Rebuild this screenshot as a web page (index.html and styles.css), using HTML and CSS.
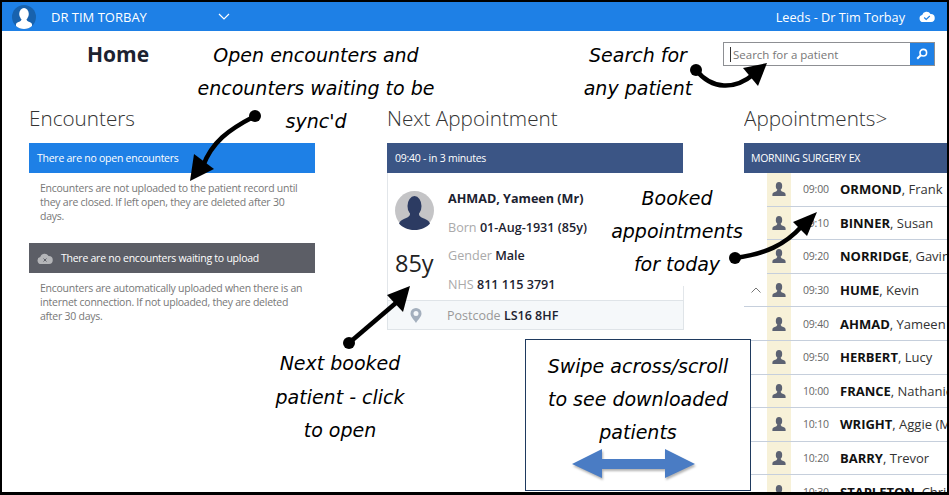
FILE: index.html
```html
<!DOCTYPE html>
<html lang="en">
<head>
    <meta charset="UTF-8">
    <title>Home</title>
    <link rel="stylesheet" href="styles.css">
</head>
<body>
<svg class="defs" width="0" height="0">
    <symbol id="person" viewBox="0 0 14 14">
        <ellipse cx="7" cy="4" rx="3.2" ry="4"/>
        <path d="M5.2 7.2c.2 1.4-.6 2-2 2.6C1.6 10.500.4 11 .4 12.400V14h13.200v-1.600c0-1.400-1.200-1.900-2.800-2.600-1.400-.6-2.200-1.200-2-2.600z"/>
    </symbol>
</svg>
<div class="frame">
    <header class="topbar">
        <svg class="user-icon" viewBox="0 0 24 24">
            <circle cx="12" cy="12" r="12" fill="#1862ae"/>
            <ellipse cx="12" cy="9" rx="4.800" ry="6" fill="#fff"/>
            <path d="M9.500 13.500c.2 2-1 2.800-3 3.500-1.500.6-2.500 1.200-2.500 2.500V21c2 2 5 3 8 3s6-1 8-3v-1.500c0-1.300-1-1.900-2.500-2.500-2-.7-3.200-1.500-3-3.500z" fill="#fff"/>
        </svg>
        <span class="user-name">DR TIM TORBAY</span>
        <svg class="chevron" viewBox="0 0 12 7"><path d="M1 1l5 5 5-5" fill="none" stroke="#fff" stroke-width="1.200"/></svg>
        <span class="site-name">Leeds - Dr Tim Torbay</span>
        <svg class="cloud-icon" viewBox="0 0 16 11">
            <path d="M4 11a3.500 3.500 0 0 1-.8-6.900A4.500 4.500 0 0 1 11.500 3a4 4 0 0 1 .5 8z" fill="#fff"/>
            <path d="M5.200 6.500l2 2 3.600-3.500" fill="none" stroke="#1e80e6" stroke-width="1.200"/>
        </svg>
    </header>

    <div class="title-row">
        <h1 class="page-title">Home</h1>
        <div class="search">
            <div class="search-input"><span class="caret"></span>Search for a patient</div>
            <div class="search-btn">
                <svg viewBox="0 0 12 12" width="12" height="12"><circle cx="7.300" cy="4.700" r="3.300" fill="none" stroke="#fff" stroke-width="1.600"/><path d="M4.800 7.200L1.200 10.800" stroke="#fff" stroke-width="2"/></svg>
            </div>
        </div>
    </div>

    <main class="columns">
        <section>
            <h2 class="col-title">Encounters</h2>
            <div class="banner banner-blue">There are no open encounters</div>
            <p class="note">Encounters are not uploaded to the patient record until they are closed. If left open, they are deleted after 30 days.</p>
            <div class="banner banner-grey">
                <svg class="upload-icon" viewBox="0 0 16 11">
                    <path d="M4 11a3.500 3.500 0 0 1-.8-6.900A4.500 4.500 0 0 1 11.500 3a4 4 0 0 1 .5 8z" fill="#b4b5b8"/>
                    <path d="M6.500 5.500l3 3m0-3l-3 3" stroke="#5c5e66" stroke-width="1"/>
                </svg>
                There are no encounters waiting to upload
            </div>
            <p class="note">Encounters are automatically uploaded when there is an internet connection. If not uploaded, they are deleted after 30 days.</p>
        </section>

        <section>
            <h2 class="col-title">Next Appointment</h2>
            <div class="banner banner-navy">09:40 - in 3 minutes</div>
            <div class="patient-card">
                <div class="patient-side">
                    <svg class="patient-photo" viewBox="0 0 39 39">
                        <circle cx="19.500" cy="19.500" r="19.500" fill="#c4c4c6"/>
                        <ellipse cx="19.500" cy="15" rx="7" ry="10" fill="#2c3b62"/>
                        <path d="M15 22c.3 3-1.500 4-5 5.500-3 1.200-5 2.500-6 5 3.500 4 9 6.500 15.500 6.500S31.500 36.500 35 32.500c-1-2.500-3-3.800-6-5-3.500-1.500-5.300-2.500-5-5.500z" fill="#2c3b62"/>
                    </svg>
                    <div class="patient-age">85y</div>
                </div>
                <div class="patient-info">
                    <div class="patient-line patient-name"><b>AHMAD, Yameen (Mr)</b></div>
                    <div class="patient-line"><span>Born</span> <b>01-Aug-1931 (85y)</b></div>
                    <div class="patient-line"><span>Gender</span> <b>Male</b></div>
                    <div class="patient-line"><span>NHS</span> <b>811 115 3791</b></div>
                </div>
            </div>
            <div class="postcode">
                <svg class="pin" viewBox="0 0 12 15">
                    <path fill-rule="evenodd" d="M6 0a5.500 5.500 0 0 1 5.500 5.500C11.500 9 8 11.500 6 15 4 11.500.5 9 .5 5.500A5.500 5.500 0 0 1 6 0zm0 3a2.500 2.500 0 1 0 0 5 2.500 2.500 0 0 0 0-5z" fill="#a3afbd"/>
                </svg>
                <span class="label">Postcode</span>&nbsp;<b>LS16 8HF</b>
            </div>
        </section>

        <section class="appts">
            <h2 class="col-title">Appointments&gt;</h2>
            <div class="banner banner-navy banner-session">MORNING SURGERY EX</div>
            <ul class="appt-list">
                <li class="appt"><i class="appt-flag"></i><span class="appt-icon"><svg><use href="#person"/></svg></span><span class="appt-time">09:00</span><span class="appt-name"><b>ORMOND</b>, Frank</span></li>
                <li class="appt"><i class="appt-flag"></i><span class="appt-icon"><svg><use href="#person"/></svg></span><span class="appt-time">09:10</span><span class="appt-name"><b>BINNER</b>, Susan</span></li>
                <li class="appt"><i class="appt-flag"></i><span class="appt-icon"><svg><use href="#person"/></svg></span><span class="appt-time">09:20</span><span class="appt-name"><b>NORRIDGE</b>, Gavin</span></li>
                <li class="appt"><i class="appt-flag"><svg viewBox="0 0 10 6"><path d="M.5 5.500L5 1l4.500 4.500" fill="none" stroke="#777" stroke-width="1"/></svg></i><span class="appt-icon"><svg><use href="#person"/></svg></span><span class="appt-time">09:30</span><span class="appt-name"><b>HUME</b>, Kevin</span></li>
                <li class="appt"><i class="appt-flag"></i><span class="appt-icon"><svg><use href="#person"/></svg></span><span class="appt-time">09:40</span><span class="appt-name"><b>AHMAD</b>, Yameen</span></li>
                <li class="appt"><i class="appt-flag"></i><span class="appt-icon"><svg><use href="#person"/></svg></span><span class="appt-time">09:50</span><span class="appt-name"><b>HERBERT</b>, Lucy</span></li>
                <li class="appt"><i class="appt-flag"></i><span class="appt-icon"><svg><use href="#person"/></svg></span><span class="appt-time">10:00</span><span class="appt-name"><b>FRANCE</b>, Nathaniel</span></li>
                <li class="appt"><i class="appt-flag"></i><span class="appt-icon"><svg><use href="#person"/></svg></span><span class="appt-time">10:10</span><span class="appt-name"><b>WRIGHT</b>, Aggie (Mrs)</span></li>
                <li class="appt"><i class="appt-flag"></i><span class="appt-icon"><svg><use href="#person"/></svg></span><span class="appt-time">10:20</span><span class="appt-name"><b>BARRY</b>, Trevor</span></li>
                <li class="appt"><i class="appt-flag"></i><span class="appt-icon"><svg><use href="#person"/></svg></span><span class="appt-time">10:30</span><span class="appt-name"><b>STAPLETON</b>, Chris</span></li>
            </ul>
        </section>
    </main>

    <!-- callouts drawn on top of the screen -->
    <div class="callout callout-open">Open encounters and<br>encounters waiting to be<br>sync'd</div>
    <div class="callout callout-search">Search for<br>any patient</div>
    <div class="callout callout-booked">Booked<br>appointments<br>for today</div>
    <div class="callout callout-next">Next booked<br>patient - click<br>to open</div>
    <div class="callout callout-swipe">Swipe across/scroll<br>to see downloaded<br>patients</div>

    <svg class="arrows" viewBox="0 0 949 495" width="949" height="495">
        <g fill="#000">
            <circle cx="255" cy="116" r="6"/>
            <path d="M255 116C228 130 212 142 203 166" fill="none" stroke="#000" stroke-width="4.500"/>
            <path d="M190 181l4-27 20 15z"/>
            <circle cx="696" cy="70" r="6"/>
            <path d="M696 70C712 90 735 90 754 74" fill="none" stroke="#000" stroke-width="4.500"/>
            <path d="M767 63l-24 5 15 18z"/>
            <circle cx="735" cy="258" r="6"/>
            <path d="M735 258C765 254 785 245 802 226" fill="none" stroke="#000" stroke-width="4.500"/>
            <path d="M817 212l-24 10 14 14z"/>
            <circle cx="349" cy="343" r="6"/>
            <path d="M349 343L397 302" fill="none" stroke="#000" stroke-width="4.500"/>
            <path d="M410 286l-23 9 16 17z"/>
        </g>
        <path class="swipe-arrow" d="M572 464l30-15v10h63v-10l30 15-30 14v-9h-63v9z"/>
    </svg>
</div>
</body>
</html>
```

FILE: styles.css
```css
* {
    box-sizing: border-box;
}
body {
    margin: 0;
    font-family: 'Open Sans', 'Noto Sans', sans-serif;
    background: #fff;
    color: #111;
}
.defs {
    position: absolute;
}
.frame {
    position: relative;
    width: 949px;
    height: 495px;
    border: 2px solid #000;
    border-bottom-width: 3px;
    overflow: hidden;
    background: #fff;
}
.topbar {
    display: flex;
    align-items: center;
    height: 29px;
    padding: 0 12px 0 10px;
    background: #1e80e6;
    color: #fff;
    font-size: 13px;
}
.user-icon {
    width: 24px;
    height: 24px;
}
.user-name {
    margin-left: 15px;
}
.chevron {
    width: 12px;
    height: 7px;
    margin-left: 71px;
}
.site-name {
    margin-left: auto;
    font-size: 12.700px;
}
.cloud-icon {
    width: 16px;
    height: 11px;
    margin-left: 14px;
}
.title-row {
    display: flex;
    justify-content: space-between;
    align-items: flex-start;
    height: 72px;
    padding: 11px 0 0 85px;
    margin-right: 12px;
}
.page-title {
    margin: 0;
    font-size: 21px;
    line-height: 24px;
    font-weight: 700;
    color: #1c2230;
}
.search {
    display: flex;
    width: 212px;
    height: 24px;
    border: 1px solid #8d8f93;
}
.search-input {
    display: flex;
    align-items: center;
    flex: 1;
    padding-left: 6px;
    font-size: 11.500px;
    color: #777;
}
.caret {
    width: 1px;
    height: 15px;
    margin-right: 2px;
    background: #333;
}
.search-btn {
    display: flex;
    align-items: center;
    justify-content: center;
    width: 24px;
    background: #1e80e6;
}
.columns {
    display: grid;
    grid-template-columns: 358px 357px 1fr;
    padding-left: 27px;
}
.col-title {
    margin: 0 0 10px;
    font-size: 20.700px;
    line-height: 30px;
    font-weight: 300;
    color: #333;
}
.banner {
    display: flex;
    align-items: center;
    height: 30px;
    padding-left: 8px;
    font-size: 10.500px;
    letter-spacing: -0.25px;
    color: #fff;
}
.banner-blue {
    width: 286px;
    margin-top: 1px;
    background: #1e80e6;
}
.banner-grey {
    width: 286px;
    background: #5c5e66;
}
.banner-navy {
    width: 296px;
    background: #3b5585;
}
.banner-session {
    width: auto;
    padding-left: 7px;
}
.upload-icon {
    width: 16px;
    height: 11px;
    margin-right: 8px;
}
.note {
    width: 267px;
    margin: 8px 0 20px 11px;
    font-size: 10.500px;
    letter-spacing: -0.25px;
    line-height: 14px;
    color: #777;
}
.patient-card {
    display: flex;
    width: 297px;
    height: 127px;
    padding: 18px 0 0 7px;
    border-left: 1px solid #e2e6ea;
    border-right: 1px solid #e2e6ea;
}
.patient-side {
    flex: none;
    width: 53px;
}
.patient-photo {
    display: block;
    width: 39px;
    height: 39px;
}
.patient-age {
    margin-top: 18px;
    font-size: 23.500px;
    line-height: 30px;
    color: #222;
}
.patient-info {
    font-size: 12.600px;
}
.patient-line {
    height: 28.500px;
    line-height: 16px;
    color: #aaa;
}
.patient-line b {
    color: #1c2230;
    font-weight: 600;
}
.patient-line.patient-name b {
    font-weight: 700;
}
.postcode {
    display: flex;
    align-items: center;
    width: 297px;
    height: 30px;
    padding-left: 22px;
    font-size: 12.500px;
    background: #f5f8fa;
    border: 1px solid #dfe4e8;
}
.postcode b {
    font-weight: 600;
    color: #1c2230;
}
.postcode .label {
    color: #999;
}
.pin {
    width: 12px;
    height: 15px;
    margin-right: 25px;
}
.appts {
    overflow: hidden;
    min-width: 0;
}
.appt-list {
    margin: 0;
    padding: 0;
    list-style: none;
}
.appt {
    display: flex;
    align-items: center;
    height: 33.600px;
    border-bottom: 1px solid #c6cfdc;
    white-space: nowrap;
}
.appt-flag {
    display: flex;
    flex: none;
    align-items: center;
    justify-content: center;
    width: 23px;
}
.appt-flag svg {
    width: 10px;
    height: 6px;
}
.appt-icon {
    display: flex;
    flex: none;
    align-items: center;
    justify-content: center;
    width: 24px;
    height: 100%;
    background: #f7f1d8;
}
.appt-icon svg {
    width: 14px;
    height: 14px;
    fill: #5c6272;
}
.appt-time {
    flex: none;
    width: 37px;
    margin-left: 12px;
    font-size: 10.500px;
    letter-spacing: -0.2px;
    color: #666;
}
.appt-name {
    flex: none;
    font-size: 13px;
    color: #333;
}
.appt-name b {
    color: #111;
}
.callout {
    position: absolute;
    font-family: 'DejaVu Sans', sans-serif;
    font-style: oblique;
    font-size: 19px;
    line-height: 33px;
    text-align: center;
    color: #000;
    white-space: nowrap;
}
.callout-open {
    left: 184px;
    top: 37px;
    width: 260px;
}
.callout-search {
    left: 566px;
    top: 37px;
    width: 140px;
}
.callout-booked {
    left: 609px;
    top: 171px;
    width: 156px;
    height: 113px;
    padding: 9px 24px 0 0;
    background: #fff;
    z-index: 1;
}
.callout-next {
    left: 255px;
    top: 345px;
    width: 166px;
    line-height: 33.500px;
}
.callout-swipe {
    left: 523px;
    top: 337px;
    width: 226px;
    height: 152px;
    padding-top: 10px;
    background: #fff;
    border: 1px solid #1f3a5f;
    z-index: 1;
}
.arrows {
    position: absolute;
    left: -2px;
    top: -2px;
    z-index: 2;
}
.swipe-arrow {
    fill: #4a7cc4;
    filter: drop-shadow(1px 2px 1px rgba(0, 0, 0, 0.3));
}
```
